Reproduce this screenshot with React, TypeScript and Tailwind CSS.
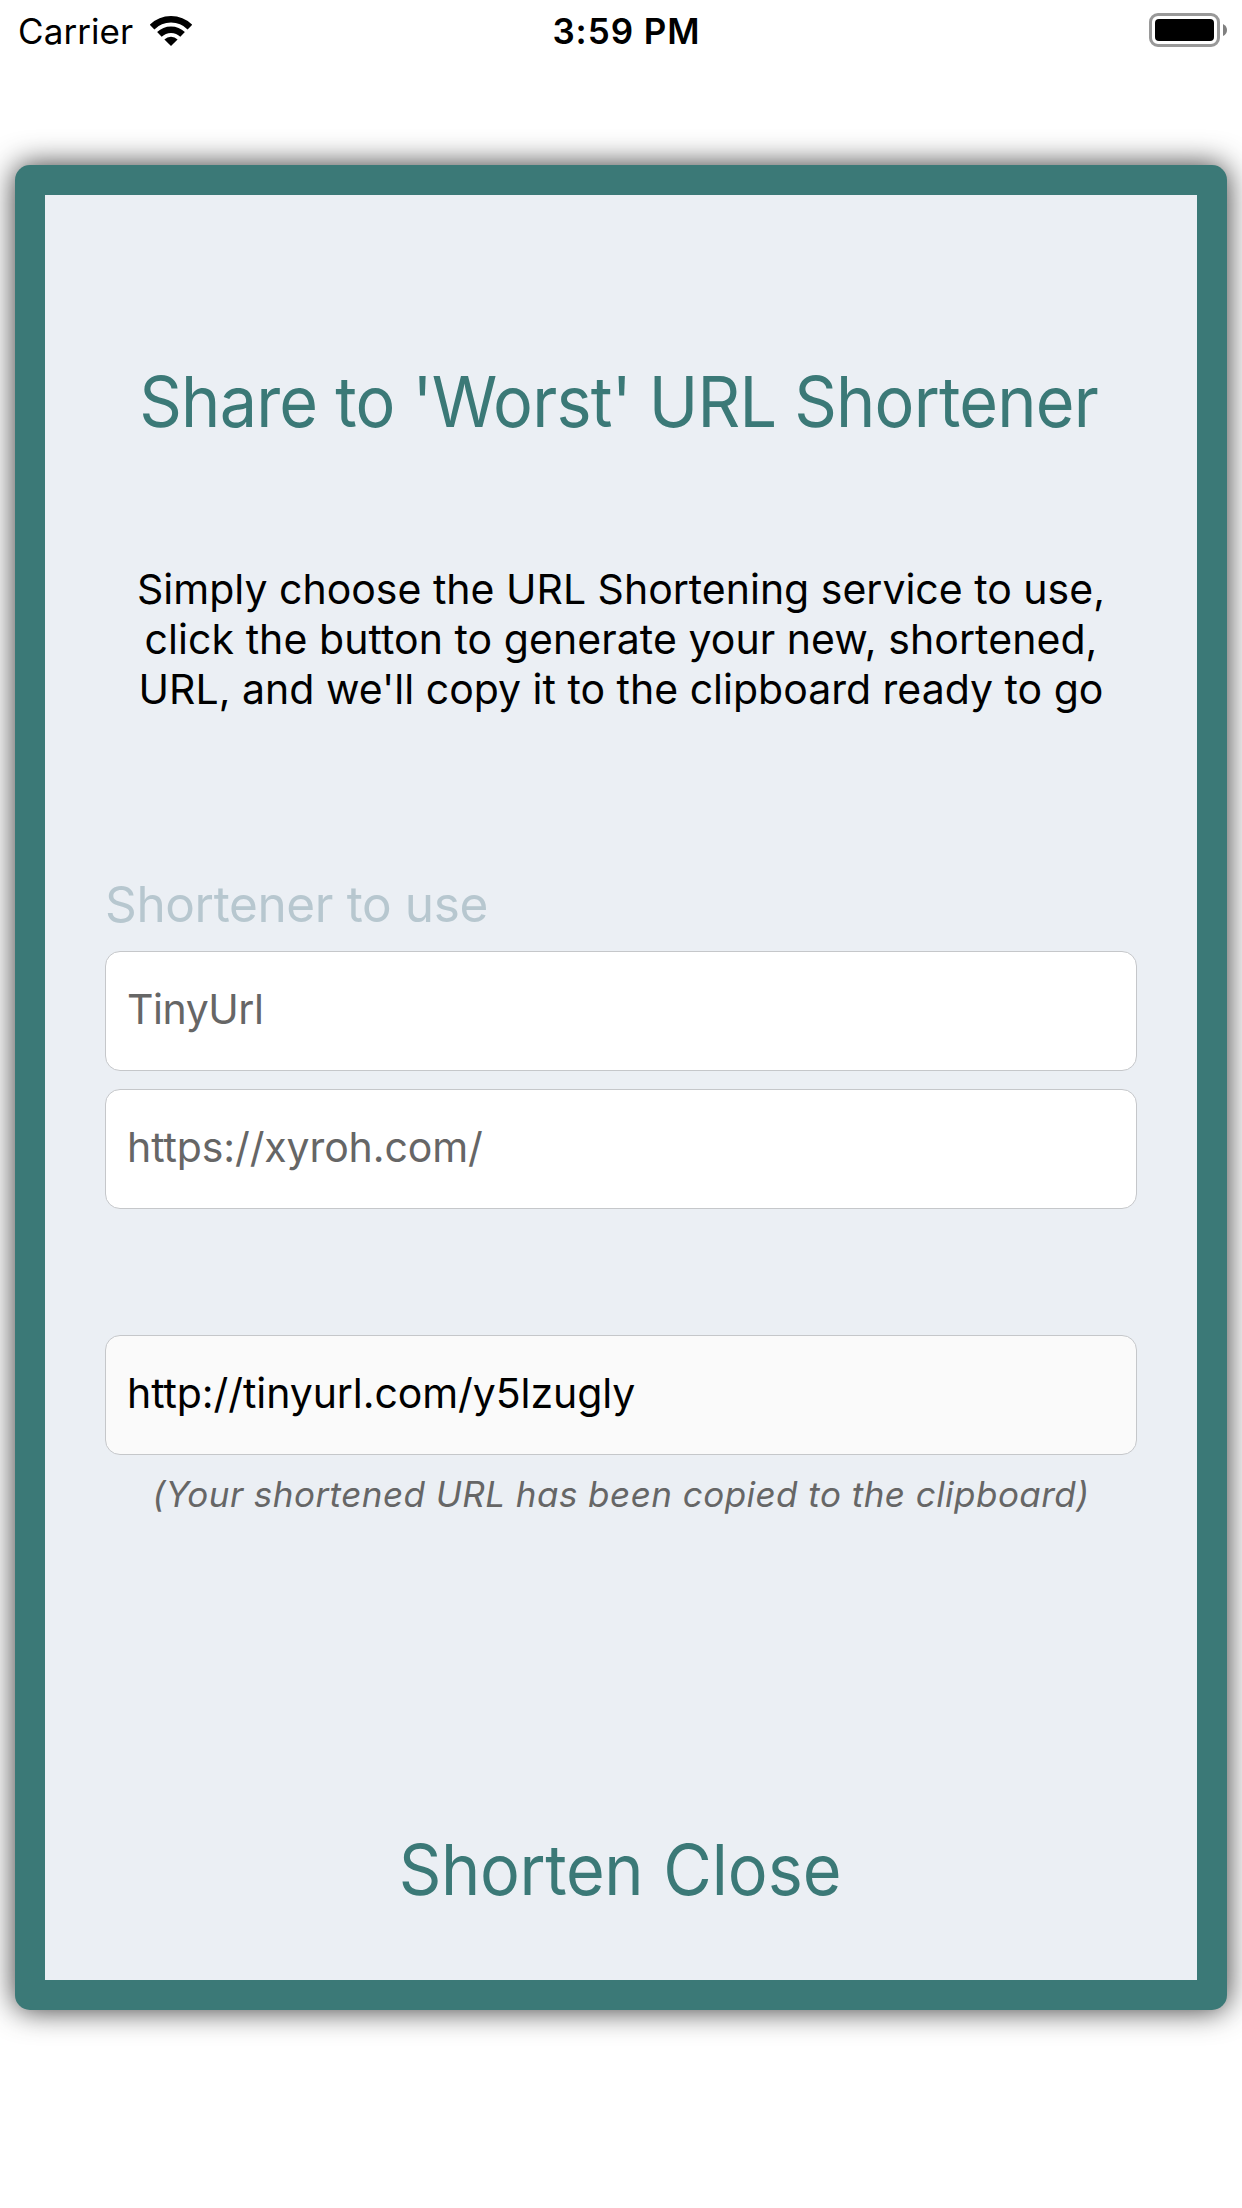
import type { ReactNode } from "react";

function WifiIcon() {
  return (
    <svg className="h-[30px] w-[42px]" viewBox="0 0 42 30" fill="none" stroke="#000">
      <path d="M2.1 11.1A26.75 26.75 0 0 1 39.9 11.1" strokeWidth="6.5" />
      <path d="M9.4 18.4A16.5 16.5 0 0 1 32.6 18.4" strokeWidth="6.5" />
      <path d="M21 30L14.4 23.4A9.3 9.3 0 0 1 27.6 23.4Z" fill="#000" stroke="none" />
    </svg>
  );
}

function BatteryIcon() {
  return (
    <svg className="h-[34px] w-[78px]" viewBox="0 0 78 34">
      <rect x="1.5" y="1.5" width="68" height="31" rx="7.5" fill="none" stroke="#999" strokeWidth="3" />
      <rect x="6" y="6" width="59" height="22" rx="4" fill="#000" />
      <path d="M74 11Q78 13 78 17T74 23Z" fill="#808080" />
    </svg>
  );
}

function StatusBar() {
  return (
    <header className="grid h-[62px] grid-cols-3 items-center pl-[18px] pr-[15px] text-[35px] leading-[62px] text-black">
      <div className="flex items-center gap-[17px]">
        <span className="tracking-[0.08px]">Carrier</span>
        <WifiIcon />
      </div>
      <span className="pl-2 text-center font-semibold tracking-[0.96px]">3:59 PM</span>
      <div className="flex justify-end pb-[2px]">
        <BatteryIcon />
      </div>
    </header>
  );
}

function Field({ children, className }: { children: ReactNode; className: string }) {
  return (
    <div
      className={`flex h-[120px] w-full items-center rounded-[15px] border border-[#c5c7ca] pb-[4px] pl-[21px] text-[41px] leading-[50px] ${className}`}
    >
      {children}
    </div>
  );
}

export default function App() {
  return (
    <div className="h-[2208px] w-[1242px] overflow-hidden bg-white font-['Inter',sans-serif]">
      <StatusBar />
      <main className="mx-[15px] mt-[103px] h-[1845px] rounded-[15px] bg-[#3b7977] p-[30px] shadow-[0_0_30px_rgba(0,0,0,0.8)]">
        <div className="flex h-[1785px] flex-col items-center bg-[#ebeff4] px-[60px] pt-[162px]">
          <h1 className="mr-[4px] scale-x-95 whitespace-nowrap text-[70px] leading-[90px] tracking-[-0.83px] text-[#3b7977]">
            Share to 'Worst' URL Shortener
          </h1>
          <p className="mt-[117px] whitespace-nowrap text-center text-[41px] leading-[50px] text-black">
            Simply choose the URL Shortening service to use,
            <br />
            <span className="tracking-[0.06px]">click the button to generate your new, shortened,</span>
            <br />
            URL, and we'll copy it to the clipboard ready to go
          </p>
          <label className="mt-[160px] w-full text-[49.5px] leading-[60px] tracking-[-0.37px] text-[#b7c7cf]">
            Shortener to use
          </label>
          <Field className="mt-[17px] bg-white tracking-[-0.44px] text-[#666]">TinyUrl</Field>
          <Field className="mt-[18px] bg-white tracking-[-0.11px] text-[#666]">https://xyroh.com/</Field>
          <Field className="mt-[126px] bg-[#fafafa] tracking-[-0.08px] text-black">http://tinyurl.com/y5lzugly</Field>
          <p className="mt-[14px] whitespace-nowrap text-[35px] italic leading-[50px] tracking-[0.46px] text-[#666]">
            (Your shortened URL has been copied to the clipboard)
          </p>
          <div className="mr-[2px] mt-[306px] flex scale-x-95 gap-[21px] text-[70px] leading-[90px] text-[#3b7977]">
            <button className="tracking-[-0.38px]">Shorten</button>
            <button>Close</button>
          </div>
        </div>
      </main>
    </div>
  );
}
